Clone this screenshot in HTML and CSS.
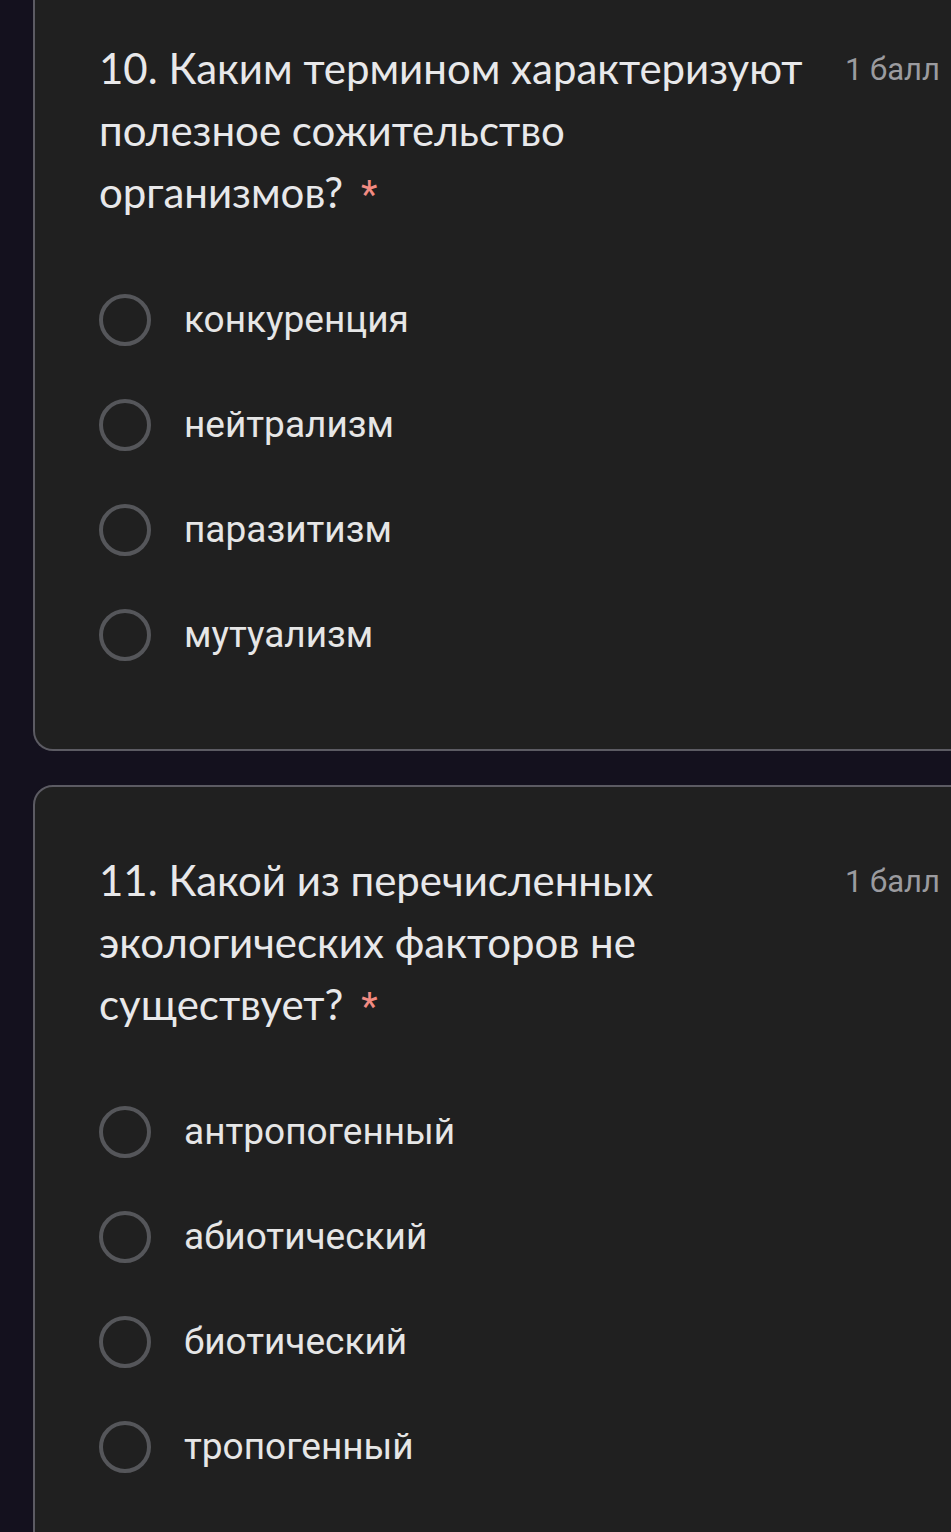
FILE: index.html
```html
<!DOCTYPE html>
<html lang="ru">
<head>
<meta charset="utf-8">
<title>Форма</title>
<link rel="stylesheet" href="styles.css">
</head>
<body>
<div class="page">
  <section class="card card--first">
    <div class="q-head">
      <h2 class="q-title">10. Каким термином характеризуют полезное сожительство организмов?<span class="req">*</span></h2>
      <span class="q-points">1 балл</span>
    </div>
    <ul class="options">
      <li class="option"><span class="radio"></span><span class="opt-label">конкуренция</span></li>
      <li class="option"><span class="radio"></span><span class="opt-label">нейтрализм</span></li>
      <li class="option"><span class="radio"></span><span class="opt-label">паразитизм</span></li>
      <li class="option"><span class="radio"></span><span class="opt-label">мутуализм</span></li>
    </ul>
  </section>
  <section class="card card--second">
    <div class="q-head">
      <h2 class="q-title">11. Какой из перечисленных экологических факторов не существует?<span class="req">*</span></h2>
      <span class="q-points">1 балл</span>
    </div>
    <ul class="options">
      <li class="option"><span class="radio"></span><span class="opt-label">антропогенный</span></li>
      <li class="option"><span class="radio"></span><span class="opt-label">абиотический</span></li>
      <li class="option"><span class="radio"></span><span class="opt-label">биотический</span></li>
      <li class="option"><span class="radio"></span><span class="opt-label">тропогенный</span></li>
    </ul>
  </section>
</div>
</body>
</html>
```

FILE: styles.css
```css
html, body {
  margin: 0;
  padding: 0;
}
body {
  background: #14111e;
  overflow: hidden;
  font-family: Roboto, "Noto Sans", sans-serif;
}
.page {
  width: 951px;
  height: 1532px;
  overflow: hidden;
  display: flex;
  flex-direction: column;
  gap: 34px;
}
.card {
  margin-left: 33px;
  margin-right: -40px;
  background: #202020;
  border: 2px solid #5c5b63;
  border-radius: 20px;
  padding: 62px 0 62px 64px;
}
.card--first {
  border-top: none;
  border-top-left-radius: 0;
  border-top-right-radius: 0;
  padding-top: 37px;
}
.q-head {
  display: flex;
  align-items: flex-start;
}
.q-title {
  width: 712px;
  margin: 0 34px 0 0;
  font-family: Lato, "Open Sans", sans-serif;
  font-weight: 400;
  font-size: 42px;
  line-height: 62px;
  color: #e8e8ea;
}
.req {
  display: inline-block;
  margin-left: 18px;
  color: #f28b82;
  font-family: Roboto, sans-serif;
  font-size: 38px;
  line-height: 1;
}
.q-points {
  font-family: Roboto, sans-serif;
  font-size: 31px;
  line-height: 62px;
  margin-top: 2px;
  color: #9b9b9f;
  white-space: nowrap;
}
.options {
  list-style: none;
  margin: 44px 0 0;
  padding: 0;
}
.option {
  height: 105px;
  display: flex;
  align-items: center;
  gap: 33px;
}
.radio {
  box-sizing: border-box;
  width: 52px;
  height: 52px;
  border: 4px solid #55565a;
  border-radius: 50%;
  flex: none;
}
.opt-label {
  font-family: Roboto, sans-serif;
  font-size: 37px;
  color: #e6e6e6;
}
```
